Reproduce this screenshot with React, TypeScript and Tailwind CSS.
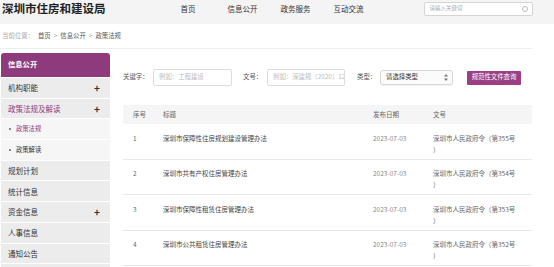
import React from 'react';

const nav = [
  { label: '首页', cls: 'ml-[75px]' },
  { label: '信息公开', cls: 'ml-[32px]' },
  { label: '政务服务', cls: 'ml-[23px]' },
  { label: '互动交流', cls: 'ml-[23px]' },
];

type SideItem = { label: string; plus?: boolean; sub?: boolean; active?: boolean };

const side: SideItem[] = [
  { label: '机构职能', plus: true },
  { label: '政策法规及解读', plus: true, active: true },
  { label: '政策法规', sub: true, active: true },
  { label: '政策解读', sub: true },
  { label: '规划计划' },
  { label: '统计信息' },
  { label: '资金信息', plus: true },
  { label: '人事信息' },
  { label: '通知公告' },
  { label: '' },
];

const rows = [
  { no: '1', title: '深圳市保障性住房规划建设管理办法', date: '2023-07-03', doc: '深圳市人民政府令（第355号' },
  { no: '2', title: '深圳市共有产权住房管理办法', date: '2023-07-03', doc: '深圳市人民政府令（第354号' },
  { no: '3', title: '深圳市保障性租赁住房管理办法', date: '2023-07-03', doc: '深圳市人民政府令（第353号' },
  { no: '4', title: '深圳市公共租赁住房管理办法', date: '2023-07-03', doc: '深圳市人民政府令（第352号' },
];

function Plus() {
  return <span className="text-[10px] leading-none font-bold text-[#333]">+</span>;
}

export default function App() {
  return (
    <div className="h-[267px] w-[554px] overflow-hidden bg-white font-['Noto_Sans_CJK_SC','Noto_Sans',sans-serif] text-[#555]">
      <header className="h-[24px] bg-[#f4f4f4]">
        <div className="flex h-[18px] items-center pl-[2px]">
          <h1 className="text-[11.5px] font-bold leading-none text-[#222]">深圳市住房和建设局</h1>
          {nav.map((n) => (
            <a key={n.label} className={`${n.cls} text-[7.5px] leading-none text-[#333]`}>
              {n.label}
            </a>
          ))}
          <div className="ml-[60px] flex h-[14px] w-[109px] items-center justify-between rounded-[2px] border border-[#d4d4d4] bg-white pl-[5px] pr-[4px]">
            <span className="text-[5.5px] leading-none text-[#aaa]">请输入关键词</span>
            <span className="h-[6px] w-[6px] rounded-full border border-[#bbb]" />
          </div>
        </div>
      </header>

      <div className="w-[532px]">
        <div className="flex h-[25px] items-center border-b border-[#eeeeee] pl-[2px] text-[6.4px] leading-none">
          <span className="text-[#aaa]">当前位置：</span>
          <span className="ml-[4px] text-[#555]">首页</span>
          <span className="mx-[3px] text-[#999]">&gt;</span>
          <span className="text-[#555]">信息公开</span>
          <span className="mx-[3px] text-[#999]">&gt;</span>
          <span className="text-[#555]">政策法规</span>
        </div>

        <div className="flex pt-[4px]">
          <aside className="ml-[1px] w-[109px] shrink-0">
            <div className="flex h-[24px] items-center rounded-t-[3px] bg-[#8e3b7d] pl-[7px] text-[7.3px] font-bold leading-none text-white">
              信息公开
            </div>
            {side.map((s, i) => (
              <div
                key={i}
                className={`flex h-[20.7px] items-center justify-between border-t border-white pr-[10px] leading-none ${
                  s.sub ? 'bg-[#f6f6f6] pl-[8px]' : 'bg-[#ececec] pl-[7px]'
                } ${s.active ? 'text-[#8e3b7d]' : 'text-[#333]'}`}
              >
                <span className={`flex items-center ${s.sub ? 'text-[6.3px]' : 'text-[7.5px]'}`}>
                  {s.sub ? <span className="mr-[5px] h-[2px] w-[2px] rounded-full bg-[#666]" /> : null}
                  {s.label}
                </span>
                {s.plus ? <Plus /> : null}
              </div>
            ))}
          </aside>

          <main className="ml-[13px] flex-1">
            <div className="mt-[16px] flex h-[17px] items-center text-[6.4px] leading-none">
              <span className="w-[30px] text-[#555]">关键字：</span>
              <div className="flex h-[17px] w-[79px] items-center rounded-[2px] border border-[#dcdcdc] pl-[5px] text-[#bbb]">
                例如：工程建设
              </div>
              <span className="ml-[11px] w-[24px] text-[#555]">文号：</span>
              <div className="flex h-[17px] w-[78px] items-center overflow-hidden whitespace-nowrap rounded-[2px] border border-[#dcdcdc] pl-[5px] text-[#bbb]">
                例如：深建规〔2020〕12
              </div>
              <span className="ml-[12px] w-[23px] text-[#555]">类型：</span>
              <div className="flex h-[15px] w-[73px] items-center justify-between rounded-[3px] border border-[#d8d8d8] bg-[#fbfbfb] pl-[5px] pr-[4px] text-[#333] shadow-[0_1px_1px_rgba(0,0,0,0.05)]">
                <span>请选择类型</span>
                <svg width="4" height="7" viewBox="0 0 4 7" fill="#777">
                  <path d="M2 0 L4 2.5 H0 Z" />
                  <path d="M2 7 L4 4.5 H0 Z" />
                </svg>
              </div>
              <button className="ml-[14px] flex h-[14px] w-[54px] items-center justify-center rounded-[1px] bg-[#9a3f86] text-[6.4px] leading-none text-white">
                规范性文件查询
              </button>
            </div>

            <div className="mt-[19px] w-[409px] text-[6.5px]">
              <div className="grid h-[19px] grid-cols-[40px_210px_60px_99px] items-center bg-[#f5f5f5] text-[#666]">
                <span className="pl-[10px]">序号</span>
                <span>标题</span>
                <span>发布日期</span>
                <span>文号</span>
              </div>
              {rows.map((r) => (
                <div
                  key={r.no}
                  className="grid h-[35.5px] grid-cols-[40px_210px_60px_99px] items-start border-b border-[#e8e8e8] pt-[8.5px] leading-[11px]"
                >
                  <span className="pl-[10px] text-[#666]">{r.no}</span>
                  <span className="text-[#444]">{r.title}</span>
                  <span className="text-[#888]">{r.date}</span>
                  <span className="text-[#666]">
                    <span className="block whitespace-nowrap">{r.doc}</span>
                    <span className="block">）</span>
                  </span>
                </div>
              ))}
            </div>
          </main>
        </div>
      </div>
    </div>
  );
}
